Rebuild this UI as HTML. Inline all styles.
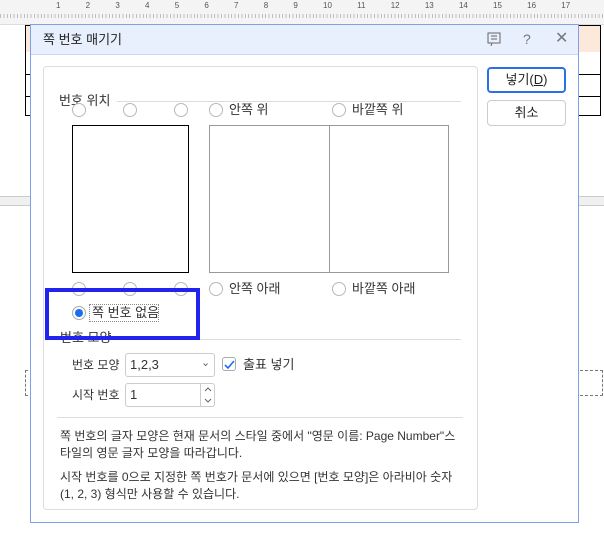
<!DOCTYPE html><html><head><style>
*{margin:0;padding:0;box-sizing:border-box}
body{width:604px;height:534px;background:#fff;position:relative;overflow:hidden;font-family:"Liberation Sans","Noto Sans CJK KR",sans-serif;font-size:12px;color:#222}
.a{position:absolute}
.r{position:absolute;width:14px;height:14px;border:1px solid #b8b8b8;border-radius:50%;background:#fff}
.t{position:absolute;white-space:nowrap;font-size:12px;line-height:16px;color:#333}
</style></head><body>
<div class="a" style="left:0;top:0;width:604px;height:25px;background:#f4f4f4;border-bottom:1px solid #ddd"></div>
<div class="a" style="left:0;top:14px;width:604px;height:4px;background:repeating-linear-gradient(90deg,#999 0 1px,transparent 1px 3.4px);opacity:.6"></div>
<div class="t" style="left:56px;top:0px;font-size:8px;line-height:12px;color:#555;word-spacing:23px">1 2 3 4 5 6 7 8 9 10 11 12 13 14 15 16 17</div>
<div class="a" style="left:25px;top:25px;width:576px;height:91px;border:1px solid #000;background:linear-gradient(#fde8dc 0 26px,#fff 26px)"></div>
<div class="a" style="left:25px;top:74px;width:576px;height:1px;background:#000"></div>
<div class="a" style="left:25px;top:96px;width:576px;height:1px;background:#000"></div>
<div class="a" style="left:0;top:196px;width:604px;height:10px;background:#f0f0f0;border-top:1px solid #ccc;border-bottom:1px solid #ccc"></div>
<div class="a" style="left:25px;top:370px;width:578px;height:26px;border:1px dashed #777"></div>
<div class="a" style="left:30px;top:24px;width:549px;height:499px;background:#fff;border:1px solid #7fa0e8"></div>
<div class="a" style="left:31px;top:25px;width:547px;height:30px;background:#e8effd;border-bottom:1px solid #c9d7f5"></div>
<div class="t" style="left:43px;top:32px;font-size:13px;color:#222">쪽 번호 매기기</div>
<svg class="a" style="left:487px;top:32px" width="14" height="14"><rect x="1" y="1" width="12" height="10" fill="none" stroke="#666"/><path d="M4 4h6M4 7h6M5 11l-1 3" stroke="#666" fill="none"/></svg>
<div class="t" style="left:523px;top:31px;font-size:14px;color:#777">?</div>
<div class="t" style="left:555px;top:31px;font-size:16px;color:#777">✕</div>
<div class="a" style="left:43px;top:66px;width:435px;height:444px;border:1px solid #ddd;border-radius:4px"></div>
<div class="a" style="left:487px;top:67px;width:79px;height:26px;border:2px solid #2f6fe6;border-radius:4px;text-align:center;line-height:22px;font-size:13px">넣기(<u>D</u>)</div>
<div class="a" style="left:487px;top:100px;width:79px;height:26px;border:1px solid #ccc;border-radius:4px;text-align:center;line-height:24px;font-size:13px">취소</div>
<div class="t" style="left:59px;top:93px;font-size:13px">번호 위치</div>
<div class="a" style="left:117px;top:101px;width:344px;height:1px;background:#ddd"></div>
<div class="r" style="left:72px;top:103px"></div><div class="r" style="left:123px;top:103px"></div><div class="r" style="left:174px;top:103px"></div><div class="r" style="left:209px;top:103px"></div><div class="r" style="left:332px;top:103px"></div>
<div class="t" style="left:229px;top:102px;font-size:13px">안쪽 위</div><div class="t" style="left:352px;top:102px;font-size:13px">바깥쪽 위</div>
<div class="a" style="left:72px;top:125px;width:117px;height:148px;border:1px solid #000"></div>
<div class="a" style="left:209px;top:125px;width:121px;height:148px;border:1px solid #999"></div>
<div class="a" style="left:329px;top:125px;width:120px;height:148px;border:1px solid #999"></div>
<div class="r" style="left:72px;top:282px"></div><div class="r" style="left:123px;top:282px"></div><div class="r" style="left:174px;top:282px"></div><div class="r" style="left:209px;top:282px"></div><div class="r" style="left:332px;top:282px"></div>
<div class="t" style="left:229px;top:281px;font-size:13px">안쪽 아래</div><div class="t" style="left:352px;top:281px;font-size:13px">바깥쪽 아래</div>
<div class="r" style="left:72px;top:306px;border-color:#aaa"><div class="a" style="left:2px;top:2px;width:8px;height:8px;border-radius:50%;background:#1a6cf5"></div></div>
<div class="a" style="left:89px;top:304px;width:70px;height:18px;border:1px dotted #888"></div>
<div class="t" style="left:92px;top:305px;font-size:13px">쪽 번호 없음</div>
<div class="t" style="left:60px;top:330px;font-size:13px">번호 모양</div>
<div class="a" style="left:121px;top:339px;width:340px;height:1px;background:#ddd"></div>
<div class="a" style="left:45px;top:288px;width:155px;height:52px;border:4px solid #2323ee"></div>
<div class="t" style="left:72px;top:357px">번호 모양</div>
<div class="a" style="left:125px;top:353px;width:90px;height:24px;border:1px solid #ccc;border-radius:3px"></div>
<div class="t" style="left:130px;top:357px;font-size:13px">1,2,3</div>
<div class="t" style="left:201px;top:355px;font-size:11px;color:#666">⌄</div>
<div class="a" style="left:222px;top:357px;width:14px;height:14px;border:1px solid #aaa;border-radius:3px"></div>
<svg class="a" style="left:223px;top:358px" width="13" height="13"><path d="M2 7l3 3 6-7" stroke="#1a6cf5" stroke-width="1.6" fill="none"/></svg>
<div class="t" style="left:243px;top:357px;font-size:13px">출표 넣기</div>
<div class="t" style="left:72px;top:387px">시작 번호</div>
<div class="a" style="left:125px;top:383px;width:90px;height:24px;border:1px solid #ccc;border-radius:3px"></div>
<div class="a" style="left:200px;top:384px;width:1px;height:22px;background:#ccc"></div>
<div class="t" style="left:130px;top:387px;font-size:13px">1</div>
<svg class="a" style="left:202px;top:385px" width="12" height="20"><path d="M3 6l3-3 3 3M3 14l3 3 3-3" stroke="#666" fill="none"/></svg>
<div class="a" style="left:57px;top:417px;width:406px;height:1px;background:#ddd"></div>
<div class="t" style="left:60px;top:428px;line-height:17px">쪽 번호의 글자 모양은 현재 문서의 스타일 중에서 "영문 이름: Page Number"스<br>타일의 영문 글자 모양을 따라갑니다.</div>
<div class="t" style="left:60px;top:469px;line-height:17px">시작 번호를 0으로 지정한 쪽 번호가 문서에 있으면 [번호 모양]은 아라비아 숫자<br>(1, 2, 3) 형식만 사용할 수 있습니다.</div>
</body></html>
